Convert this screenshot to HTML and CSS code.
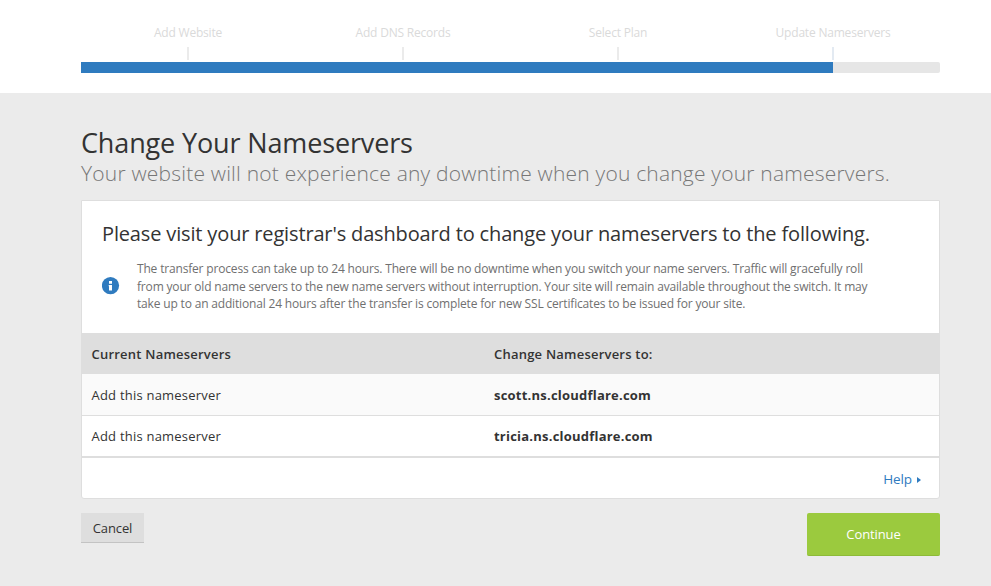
FILE: index.html
```html
<!DOCTYPE html>
<html lang="en">
<head>
<meta charset="utf-8">
<title>Change Your Nameservers</title>
<link rel="stylesheet" href="styles.css">
</head>
<body>
<header class="progress">
  <ol class="steps">
    <li>Add Website</li>
    <li>Add DNS Records</li>
    <li>Select Plan</li>
    <li>Update Nameservers</li>
  </ol>
  <div class="track"><div class="fill"></div></div>
</header>
<main>
  <h1>Change Your Nameservers</h1>
  <p class="subtitle">Your website will not experience any downtime when you change your nameservers.</p>
  <section class="card">
    <div class="intro">
      <h2>Please visit your registrar's dashboard to change your nameservers to the following.</h2>
      <div class="note">
        <svg class="info" viewBox="0 0 18 18"><circle cx="8.5" cy="8.6" r="8.6" fill="#2f7bbf"/><path d="M7 4h3v2.7H7zM6.7 8H10v5.6H7V9.2h-.3z" fill="#fff"/></svg>
        <p>The transfer process can take up to 24 hours. There will be no downtime when you switch your name servers. Traffic will gracefully roll<br>from your old name servers to the new name servers without interruption. Your site will remain available throughout the switch. It may<br>take up to an additional 24 hours after the transfer is complete for new SSL certificates to be issued for your site.</p>
      </div>
    </div>
    <div class="row head"><span>Current Nameservers</span><span>Change Nameservers to:</span></div>
    <div class="row alt"><span>Add this nameserver</span><b>scott.ns.cloudflare.com</b></div>
    <div class="row"><span>Add this nameserver</span><b>tricia.ns.cloudflare.com</b></div>
    <div class="help"><a>Help</a><svg viewBox="0 0 4 6"><path d="M0 0l4 3-4 3z" fill="#2f7bbf"/></svg></div>
  </section>
  <div class="actions"><button class="cancel">Cancel</button><button class="continue">Continue</button></div>
</main>
</body>
</html>
```
FILE: styles.css
```css
* { box-sizing: border-box; }
body, h1, h2, p, ol { margin: 0; padding: 0; }
body { background: #ebebeb; color: #333; font: 13px/20px "Open Sans", sans-serif; }
.progress { height: 93px; padding: 23px 51px 0 81px; background: #fff; }
.steps { display: grid; grid-template-columns: repeat(4, 215px); margin-left: -1px; list-style: none; color: #dadada; font-size: 12px; letter-spacing: -.2px; text-align: center; text-indent: 1px; }
.steps li { height: 39px; }
.steps li::after { content: ""; display: block; width: 2px; height: 13px; margin: 4px auto 0; background: #ebebeb; }
.steps li:last-child::after { background: #e3eaf2; }
.track { height: 11px; background: #e6e6e6; border-radius: 0 2px 2px 0; }
.fill { width: 752px; height: 11px; background: #2f7bbf; }
main { padding: 32px 51px 0 81px; }
h1 { font-size: 27px; line-height: 35px; letter-spacing: -.14px; font-weight: 400; white-space: nowrap; }
.subtitle { height: 40px; font-size: 21px; line-height: 27px; letter-spacing: .2px; font-weight: 300; color: #777; white-space: nowrap; }
.card { height: 299px; background: #fff; border: 1px solid #dedede; border-radius: 0 0 3px 3px; }
.intro { height: 132px; padding: 19px 20px 0; }
h2 { font-size: 20px; line-height: 28px; letter-spacing: -.15px; font-weight: 400; white-space: nowrap; }
.note { display: flex; align-items: center; gap: 17px; margin-top: 12px; }
.info { width: 18px; height: 18px; flex: none; }
.note p { font-size: 12px; line-height: 17.6px; letter-spacing: -.173px; color: #707070; white-space: nowrap; }
.row { display: grid; grid-template-columns: 402.5px 1fr; align-items: center; height: 41px; padding: 0 9.5px; border-bottom: 1px solid #dedede; letter-spacing: .22px; }
.head { padding-top: 2px; background: #dedede; font-weight: 600; }
.alt { height: 42px; padding-top: 1px; background: #fafafa; }
.help { display: flex; align-items: center; justify-content: flex-end; gap: 5px; height: 42px; padding: 1px 18px 0 0; border-top: 1px solid #dedede; color: #2f7bbf; font-size: 13.5px; letter-spacing: -.1px; }
.help svg { width: 4px; height: 6px; margin-top: 1px; }
.actions { display: flex; align-items: flex-start; justify-content: space-between; padding-top: 14px; }
button { padding: 0; border: 0; font: 13px/20px "Open Sans", sans-serif; letter-spacing: -.1px; }
.cancel { width: 63px; height: 30px; background: #dedede; color: #333; border-bottom: 1px solid #c3c3c3; }
.continue { width: 133px; height: 43px; background: #9bca3e; color: #fff; border-bottom: 1px solid #8dba38; border-radius: 2px; }
```
